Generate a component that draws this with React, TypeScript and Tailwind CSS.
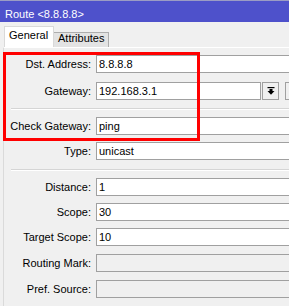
import React from "react";

function Field({ value, disabled, className }: { value?: string; disabled?: boolean; className?: string }) {
  return (
    <div
      className={`h-[18px] border border-[#a0a0a0] px-[2px] leading-[16px] whitespace-nowrap text-black ${
        disabled ? "bg-[#f0f0f0]" : "bg-white"
      } ${className ?? "w-[260px] shrink-0"}`}
    >
      {value}
    </div>
  );
}

function Row({ label, mt, children }: { label: string; mt: string; children: React.ReactNode }) {
  return (
    <div className={`flex ${mt}`}>
      <div className="w-[87px] shrink-0 text-right h-[18px] leading-[18px] whitespace-nowrap text-black">{label}</div>
      <div className="ml-[5px] flex shrink-0">{children}</div>
    </div>
  );
}

function Separator({ mt }: { mt: string }) {
  return <div className={`${mt} ml-[7px] h-[2px] border-t border-[#d5d5d5] border-b border-b-white`} />;
}

function DropIcon() {
  return (
    <svg width="8" height="8" viewBox="0 0 8 8">
      <rect x="0.5" y="0" width="7" height="1.2" fill="#000" />
      <rect x="2.5" y="2" width="3" height="2" fill="#000" />
      <polygon points="0.5,4 7.5,4 4,7.8" fill="#000" />
    </svg>
  );
}

export default function App() {
  return (
    <div className="relative w-[289px] h-[306px] overflow-hidden bg-[#f0f0f0] font-['Liberation_Sans',Arial,sans-serif] text-[11px]">
      <div className="h-[22px] border-t border-[#9b9cc4] bg-[#4e51cb] text-white pl-[5px] pt-[7px] leading-[13px] whitespace-nowrap">
        Route &lt;8.8.8.8&gt;
      </div>
      <div className="h-[25px] flex items-end pl-[4px]">
        <div className="w-[50px] h-[21px] bg-white border border-b-0 border-[#d9d9d9] pl-[4px] pt-[2px] leading-[13px] text-black">
          General
        </div>
        <div className="w-[55px] h-[15px] bg-[#e3e3e3] border border-b-0 border-l-0 border-[#adadad] pl-[4px] leading-[11px] text-black">
          Attributes
        </div>
      </div>
      <div className="ml-[3px] border-l border-[#dadada] border-t border-t-white h-[300px]">
        <Row label="Dst. Address:" mt="mt-[7px]">
          <Field value="8.8.8.8" />
        </Row>
        <Row label="Gateway:" mt="mt-[9px]">
          <Field value="192.168.3.1" className="w-[165px] shrink-0" />
          <div className="ml-[1px] w-[17px] h-[18px] border border-[#a0a0a0] bg-[#f0f0f0] flex items-center justify-center shrink-0">
            <DropIcon />
          </div>
          <div className="ml-[6px] w-[17px] h-[18px] border border-[#a0a0a0] bg-[#f0f0f0] shrink-0" />
        </Row>
        <Separator mt="mt-[8px]" />
        <Row label="Check Gateway:" mt="mt-[7px]">
          <Field value="ping" />
        </Row>
        <Row label="Type:" mt="mt-[7px]">
          <Field value="unicast" />
        </Row>
        <Separator mt="mt-[9px]" />
        <Row label="Distance:" mt="mt-[7px]">
          <Field value="1" />
        </Row>
        <Row label="Scope:" mt="mt-[7px]">
          <Field value="30" />
        </Row>
        <Row label="Target Scope:" mt="mt-[7px]">
          <Field value="10" />
        </Row>
        <Row label="Routing Mark:" mt="mt-[8px]">
          <Field disabled />
        </Row>
        <Row label="Pref. Source:" mt="mt-[8px]">
          <Field disabled />
        </Row>
      </div>
      <div className="absolute left-[3px] top-[52px] w-[197px] h-[89px] border-[3px] border-[#ff0000] pointer-events-none" />
    </div>
  );
}
